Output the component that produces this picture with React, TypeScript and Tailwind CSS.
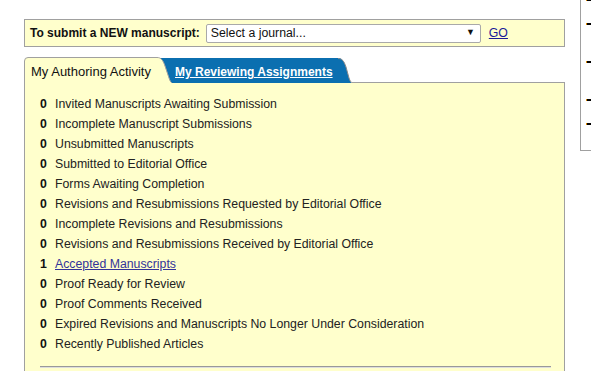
import React from "react";

const rows: { count: number; label: string; link?: boolean }[] = [
  { count: 0, label: "Invited Manuscripts Awaiting Submission" },
  { count: 0, label: "Incomplete Manuscript Submissions" },
  { count: 0, label: "Unsubmitted Manuscripts" },
  { count: 0, label: "Submitted to Editorial Office" },
  { count: 0, label: "Forms Awaiting Completion" },
  { count: 0, label: "Revisions and Resubmissions Requested by Editorial Office" },
  { count: 0, label: "Incomplete Revisions and Resubmissions" },
  { count: 0, label: "Revisions and Resubmissions Received by Editorial Office" },
  { count: 1, label: "Accepted Manuscripts", link: true },
  { count: 0, label: "Proof Ready for Review" },
  { count: 0, label: "Proof Comments Received" },
  { count: 0, label: "Expired Revisions and Manuscripts No Longer Under Consideration" },
  { count: 0, label: "Recently Published Articles" },
];

function Dash() {
  return (
    <div className="flex h-[2px] w-[5px]">
      <span className="w-[1px] bg-[#e08a00]" />
      <span className="flex-1 bg-black" />
    </div>
  );
}

export default function App() {
  return (
    <div className="w-[591px] h-[371px] overflow-hidden bg-white flex font-['Liberation_Sans',Arial,sans-serif] text-[#222]">
      {/* main column */}
      <div className="ml-[24px] w-[541px] shrink-0 pt-[19px]">
        {/* submit bar */}
        <div className="h-[28px] border border-[#a0a0a0] bg-[#ffffcc] flex items-center pl-[5px]">
          <span className="font-bold text-[12px] text-[#111]">To submit a NEW manuscript:</span>
          <div className="ml-[6px] w-[275px] h-[19px] border border-[#a9a9a9] rounded-[2px] bg-white flex items-center pl-[4px] pr-[5px] text-[12.3px] text-[#111]">
            <span className="flex-1">Select a journal...</span>
            <span className="text-[9px]">▼</span>
          </div>
          <a href="#" className="ml-[8px] text-[12.3px] text-[#1a1a99] underline">GO</a>
        </div>

        {/* tabs */}
        <div className="mt-[10px] h-[26px] flex items-end">
          <div className="relative w-[148px] h-[26px] shrink-0 z-10">
            <svg className="absolute inset-0" width="148" height="26" viewBox="0 0 148 26">
              <path
                d="M0.5,26 L0.5,4 Q0.5,0.5 4,0.5 L133,0.5 C137,0.5 139,3 141,9 L145,21 C146,24 147,25.5 148,26 Z"
                fill="#ffffcc"
              />
              <path
                d="M0.5,26 L0.5,4 Q0.5,0.5 4,0.5 L133,0.5 C137,0.5 139,3 141,9 L145,21 C146,24 147,25.5 148,26"
                fill="none"
                stroke="#a0a0a0"
              />
            </svg>
            <span className="relative block pl-[7px] pt-[5px] text-[13px] text-[#111]">My Authoring Activity</span>
          </div>
          <div className="relative -ml-[12px] w-[192px] h-[25px] shrink-0">
            <svg className="absolute inset-0" width="192" height="25" viewBox="0 0 192 25">
              <path
                d="M0,0 L178,0 C182,0 184,3 186,9 L189,20 C190,23 191,25 192,25 L0,25 Z"
                fill="#0b6fb0"
              />
              <path
                d="M178,0.5 C182,0.5 184,3 186,9 L189,20 C190,23 191,24.5 192,24.5"
                fill="none"
                stroke="#8a8a8a"
              />
            </svg>
            <a href="#" className="relative block pl-[15px] pt-[5px] text-[12px] font-bold text-white underline">
              My Reviewing Assignments
            </a>
          </div>
          <div className="flex-1 border-b border-[#a0a0a0]" />
        </div>

        {/* activity panel */}
        <div className="border-x border-[#a0a0a0] bg-[#ffffcc] pt-[11px] pl-[15px] pr-[13px] h-[300px]">
          {rows.map((r) => (
            <div key={r.label} className="flex h-[20px] items-center text-[12.3px]">
              <span className="w-[15px] font-bold text-[#111]">{r.count}</span>
              {r.link ? (
                <a href="#" className="text-[#333399] underline">{r.label}</a>
              ) : (
                <span>{r.label}</span>
              )}
            </div>
          ))}
          <div className="mt-[12px] border-t border-[#999] border-b-[#ddd] border-b" />
        </div>
      </div>

      {/* right side box, cut off */}
      <div className="ml-[15px] w-[20px] h-[151px] border-l border-b border-[#a0a0a0] flex flex-col pl-[5px]">
        <div className="mt-[-1px]"><Dash /></div>
        <div className="mt-[22px]"><Dash /></div>
        <div className="mt-[36px]"><Dash /></div>
        <div className="mt-[36px]"><Dash /></div>
        <div className="mt-[22px]"><Dash /></div>
      </div>
    </div>
  );
}
